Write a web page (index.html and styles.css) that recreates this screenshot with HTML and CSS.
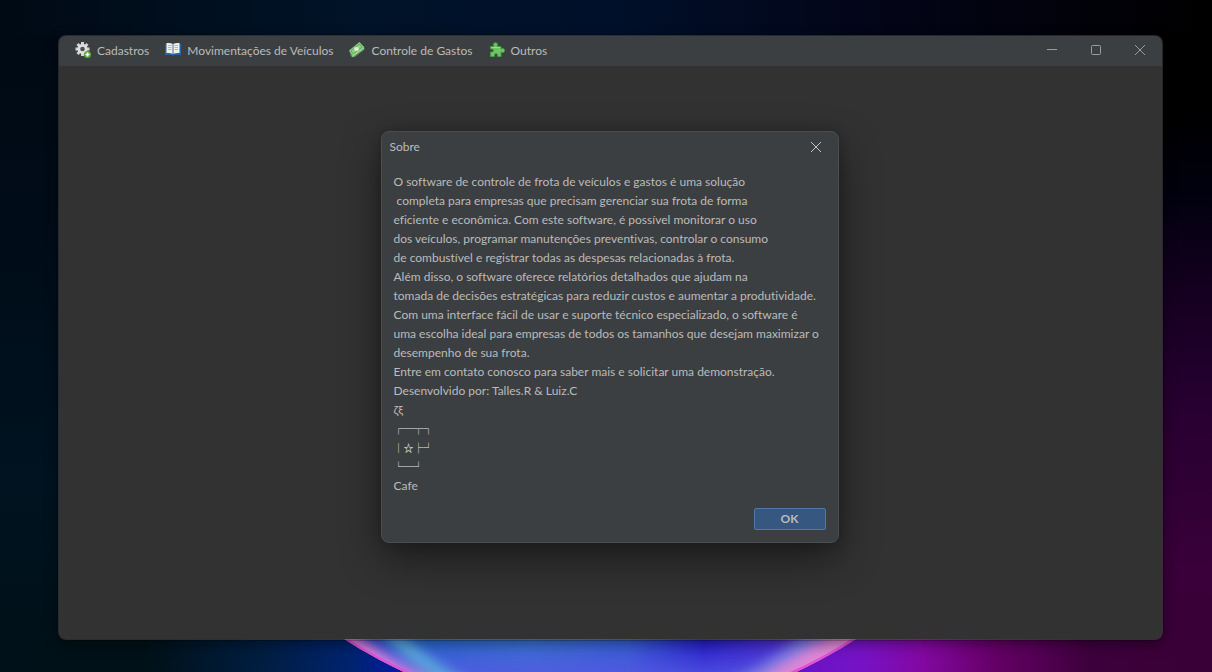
FILE: index.html
```html
<!DOCTYPE html>
<html lang="pt-BR">
<head>
<meta charset="utf-8">
<title>Controle de Frota</title>
<link rel="stylesheet" href="styles.css">
</head>
<body>
<div class="desktop">
  <svg class="wallpaper" viewBox="0 0 1212 672" preserveAspectRatio="none" aria-hidden="true">
    <defs>
      <linearGradient id="left" x1="0" y1="0" x2="0" y2="1">
        <stop offset="0" stop-color="#000a14"/><stop offset=".3" stop-color="#000c18"/><stop offset=".7" stop-color="#001320"/><stop offset="1" stop-color="#001017"/>
      </linearGradient>
      <linearGradient id="top" x1="0" y1="0" x2="1" y2="0">
        <stop offset="0" stop-color="#000a14"/><stop offset=".3" stop-color="#001328"/><stop offset=".5" stop-color="#00102a"/><stop offset=".72" stop-color="#030518"/><stop offset="1" stop-color="#000"/>
      </linearGradient>
      <linearGradient id="right" x1="0" y1="0" x2="0" y2="1">
        <stop offset="0" stop-color="#000"/><stop offset=".12" stop-color="#000"/><stop offset=".24" stop-color="#00010d"/><stop offset=".39" stop-color="#13001f"/><stop offset=".58" stop-color="#270030"/><stop offset=".84" stop-color="#390039"/><stop offset="1" stop-color="#380036"/>
      </linearGradient>
      <linearGradient id="bottom" x1="0" y1="0" x2="1" y2="0">
        <stop offset="0" stop-color="#001119"/><stop offset=".12" stop-color="#001117"/><stop offset=".22" stop-color="#001e43"/><stop offset=".29" stop-color="#00236f"/><stop offset=".34" stop-color="#0019ae"/><stop offset=".6" stop-color="#5714c4"/><stop offset=".71" stop-color="#7612c6"/><stop offset=".76" stop-color="#8308a2"/><stop offset=".82" stop-color="#650067"/><stop offset=".9" stop-color="#3d003c"/><stop offset="1" stop-color="#380036"/>
      </linearGradient>
      <linearGradient id="glass" gradientUnits="userSpaceOnUse" x1="346" y1="0" x2="857" y2="0">
        <stop offset="0" stop-color="#2033ce"/><stop offset=".12" stop-color="#2067cc"/><stop offset=".36" stop-color="#3275cc"/><stop offset=".55" stop-color="#3060cf"/><stop offset=".7" stop-color="#1d18c4"/><stop offset=".84" stop-color="#472acb"/><stop offset="1" stop-color="#8c4bd1"/>
      </linearGradient>
      <linearGradient id="glow" x1="0" y1="0" x2="0" y2="1">
        <stop offset="0" stop-color="#5b4ee8" stop-opacity="0"/><stop offset="1" stop-color="#5757e4" stop-opacity=".75"/>
      </linearGradient>
      <clipPath id="disc"><circle cx="600" cy="246" r="469"/></clipPath>
      <clipPath id="floor"><rect y="636" width="1212" height="36"/></clipPath>
      <filter id="soft" x="-10%" y="-10%" width="120%" height="120%"><feGaussianBlur stdDeviation="6"/></filter>
    </defs>
    <rect width="1212" height="672" fill="url(#top)"/>
    <rect y="36" width="500" height="636" fill="url(#left)"/>
    <rect x="1100" y="36" width="112" height="636" fill="url(#right)"/>
    <g clip-path="url(#floor)">
      <rect y="636" width="1212" height="36" fill="url(#bottom)"/>
      <g clip-path="url(#disc)">
        <rect x="330" y="636" width="540" height="36" fill="url(#glass)"/>
        <rect x="330" y="636" width="540" height="36" fill="url(#glow)"/>
        <g filter="url(#soft)" fill="none">
          <path d="M365 600Q410 665 480 694" stroke="#5aa6da" stroke-width="15"/>
          <path d="M323 620Q370 670 450 705" stroke="#da80da" stroke-width="28"/>
          <path d="M850 600Q790 665 720 694" stroke="#7779e2" stroke-width="15"/>
          <path d="M883 610Q820 668 740 705" stroke="#df87d4" stroke-width="30"/>
        </g>
        <circle cx="600" cy="246" r="468" fill="none" stroke="#e450d2" stroke-width="3"/>
      </g>
    </g>
  </svg>

  <main class="window">
    <header class="titlebar">
      <nav class="menu" aria-label="Menu principal">
        <button class="menu-item" type="button">
          <svg class="icon" viewBox="0 0 16 16" aria-hidden="true">
            <g stroke="#d2d2d2" stroke-width="3"><path d="M7.5 0v14M.5 7h14M2.5 2l10 10M12.5 2l-10 10"/></g>
            <circle cx="7.500" cy="7" r="5" fill="#dedede"/><circle cx="7.500" cy="7" r="2.300" fill="#4d5052"/>
            <circle cx="12.500" cy="12.500" r="3.500" fill="#58a83c"/><path d="M12.500 10.500v4M10.500 12.500h4" stroke="#fff" stroke-width="1.500"/>
          </svg>
          <span>Cadastros</span>
        </button>
        <button class="menu-item" type="button">
          <svg class="icon" viewBox="0 0 16 16" aria-hidden="true">
            <path d="M0 2h16v11H9.500L8 14l-1.500-1H0z" fill="#2563a5"/>
            <path d="M1.500 1Q5 .5 8 2q3-1.500 6.500-1v10Q11 10.500 8 12q-3-1.500-6.500-1z" fill="#f1f1ec"/>
            <path d="M8 2v10" stroke="#59738a"/><path d="M3 3.500h3.500M3 5.500h3.500M3 7.500h3.500M9.500 3.500H13M9.500 5.500H13M9.500 7.500H13" stroke="#b4b8b9"/>
          </svg>
          <span>Movimentações de Veículos</span>
        </button>
        <button class="menu-item" type="button">
          <svg class="icon" viewBox="0 0 16 16" aria-hidden="true">
            <path d="M.5 9l1.500 5.500 3 1L15.500 7.500 15 4z" fill="#58a256"/>
            <path d="M0 8.500L10.500 0 15 5 4 14z" fill="#91ce88"/><path d="M2 8.800l8.300-6.800 2.700 3L4.300 12z" fill="none" stroke="#60a85b"/>
            <ellipse cx="7.500" cy="7" rx="2.400" ry="2" fill="#dff2d8"/><path d="M3 14.500L15 6" stroke="#b8dfb2"/>
          </svg>
          <span>Controle de Gastos</span>
        </button>
        <button class="menu-item" type="button">
          <svg class="icon" viewBox="0 0 16 16" aria-hidden="true">
            <path d="M1.500 4.500H5Q3.500.800 6.500.800T8 4.500h4V7q3.500-1.500 3.500 1.500T12 10v4.500H8.500q.500-3-1.500-3t-1.500 3h-4V10q3 .500 3-1.500T1.500 7z" fill="#6fc466" stroke="#459a42"/>
            <path d="M2.500 5.500H11" stroke="#9cdd92"/>
          </svg>
          <span>Outros</span>
        </button>
      </nav>
      <div class="controls">
        <button class="control" type="button" aria-label="Minimizar"><svg class="glyph" viewBox="0 0 12 12"><path d="M1 5.500h10"/></svg></button>
        <button class="control" type="button" aria-label="Maximizar"><svg class="glyph" viewBox="0 0 12 12"><rect x="1.500" y="1.500" width="9" height="9" rx="1"/></svg></button>
        <button class="control" type="button" aria-label="Fechar"><svg class="glyph" viewBox="0 0 12 12"><path d="M1 1l10 10M11 1L1 11"/></svg></button>
      </div>
    </header>
  </main>

  <section class="dialog" role="dialog" aria-labelledby="dialog-title">
    <header class="dialog-head">
      <h1 class="dialog-title" id="dialog-title">Sobre</h1>
      <button class="control" type="button" aria-label="Fechar"><svg class="glyph light" viewBox="0 0 12 12"><path d="M1 1l10 10M11 1L1 11"/></svg></button>
    </header>
    <div class="message">
      <p class="lines">O software de controle de frota de veículos e gastos é uma solução
 completa para empresas que precisam gerenciar sua frota de forma
eficiente e econômica. Com este software, é possível monitorar o uso
dos veículos, programar manutenções preventivas, controlar o consumo
de combustível e registrar todas as despesas relacionadas à frota.
Além disso, o software oferece relatórios detalhados que ajudam na
tomada de decisões estratégicas para reduzir custos e aumentar a produtividade.
Com uma interface fácil de usar e suporte técnico especializado, o software é
uma escolha ideal para empresas de todos os tamanhos que desejam maximizar o
desempenho de sua frota.
Entre em contato conosco para saber mais e solicitar uma demonstração.
Desenvolvido por: Talles.R &amp; Luiz.C
ζξ</p>
      <p class="lines cup">┌─┬┐
│☆├┘
└─┘</p>
      <p class="lines">Cafe</p>
    </div>
    <footer class="actions"><button class="ok" type="button">OK</button></footer>
  </section>
</div>
</body>
</html>
```
FILE: styles.css
```css
* { box-sizing: border-box; }

body {
  margin: 0;
  background: #000a14;
  color: #bbbbbb;
  font: 12px/19px Lato, "Noto Sans", sans-serif;
  font-variant-ligatures: none;
}

button { font: inherit; color: inherit; border: 0; background: none; padding: 0; }

.desktop {
  position: relative;
  display: grid;
  min-height: 100vh;
  padding: 35px 49px 32px 58px;
}

.wallpaper { position: absolute; inset: 0; width: 100%; height: 100%; }

.window {
  position: relative;
  grid-area: 1 / 1;
  overflow: hidden;
  border: 1px solid #ffffff26;
  border-radius: 8px;
  background: #323232;
  background-clip: padding-box;
  box-shadow: 0 0 0 1px #0003, 0 4px 14px #0006;
}

.titlebar {
  display: flex;
  justify-content: space-between;
  height: 30px;
  background: #3c3f41;
}

.menu { display: flex; gap: 16px; padding: 0 0 2px 16px; }
.menu-item { display: flex; align-items: center; gap: 6px; white-space: nowrap; }
.icon { width: 16px; height: 16px; }

.controls { display: flex; }
.control { display: grid; place-items: center; width: 44px; height: 28px; }
.glyph { width: 12px; height: 12px; fill: none; stroke: #999b9c; }
.light { stroke: #c4c5c6; }

.dialog {
  position: relative;
  grid-area: 1 / 1;
  place-self: center;
  min-width: 458px;
  margin: 0 2px 2px 0;
  border: 1px solid #4b4d4e;
  border-radius: 8px;
  background: #3c3f41;
  box-shadow: 0 16px 40px #0007, 0 0 12px #0003;
}

.dialog-head { display: flex; justify-content: space-between; align-items: center; padding-left: 8px; height: 30px; }
.dialog-title { margin: 0; font-size: 12px; font-weight: 400; }

.message { padding: 10px 12px 0; }
.lines { margin: 0; white-space: pre; }
.cup { color: #f0ece6; font-family: "Noto Sans CJK JP", sans-serif; font-size: 10px; font-weight: 700; }

.actions { display: flex; justify-content: flex-end; padding: 13px 12px 12px; }
.ok {
  width: 72px;
  height: 22px;
  border: 1px solid #5078ab;
  border-radius: 2px;
  background: #365880;
  font-weight: 700;
}
```
